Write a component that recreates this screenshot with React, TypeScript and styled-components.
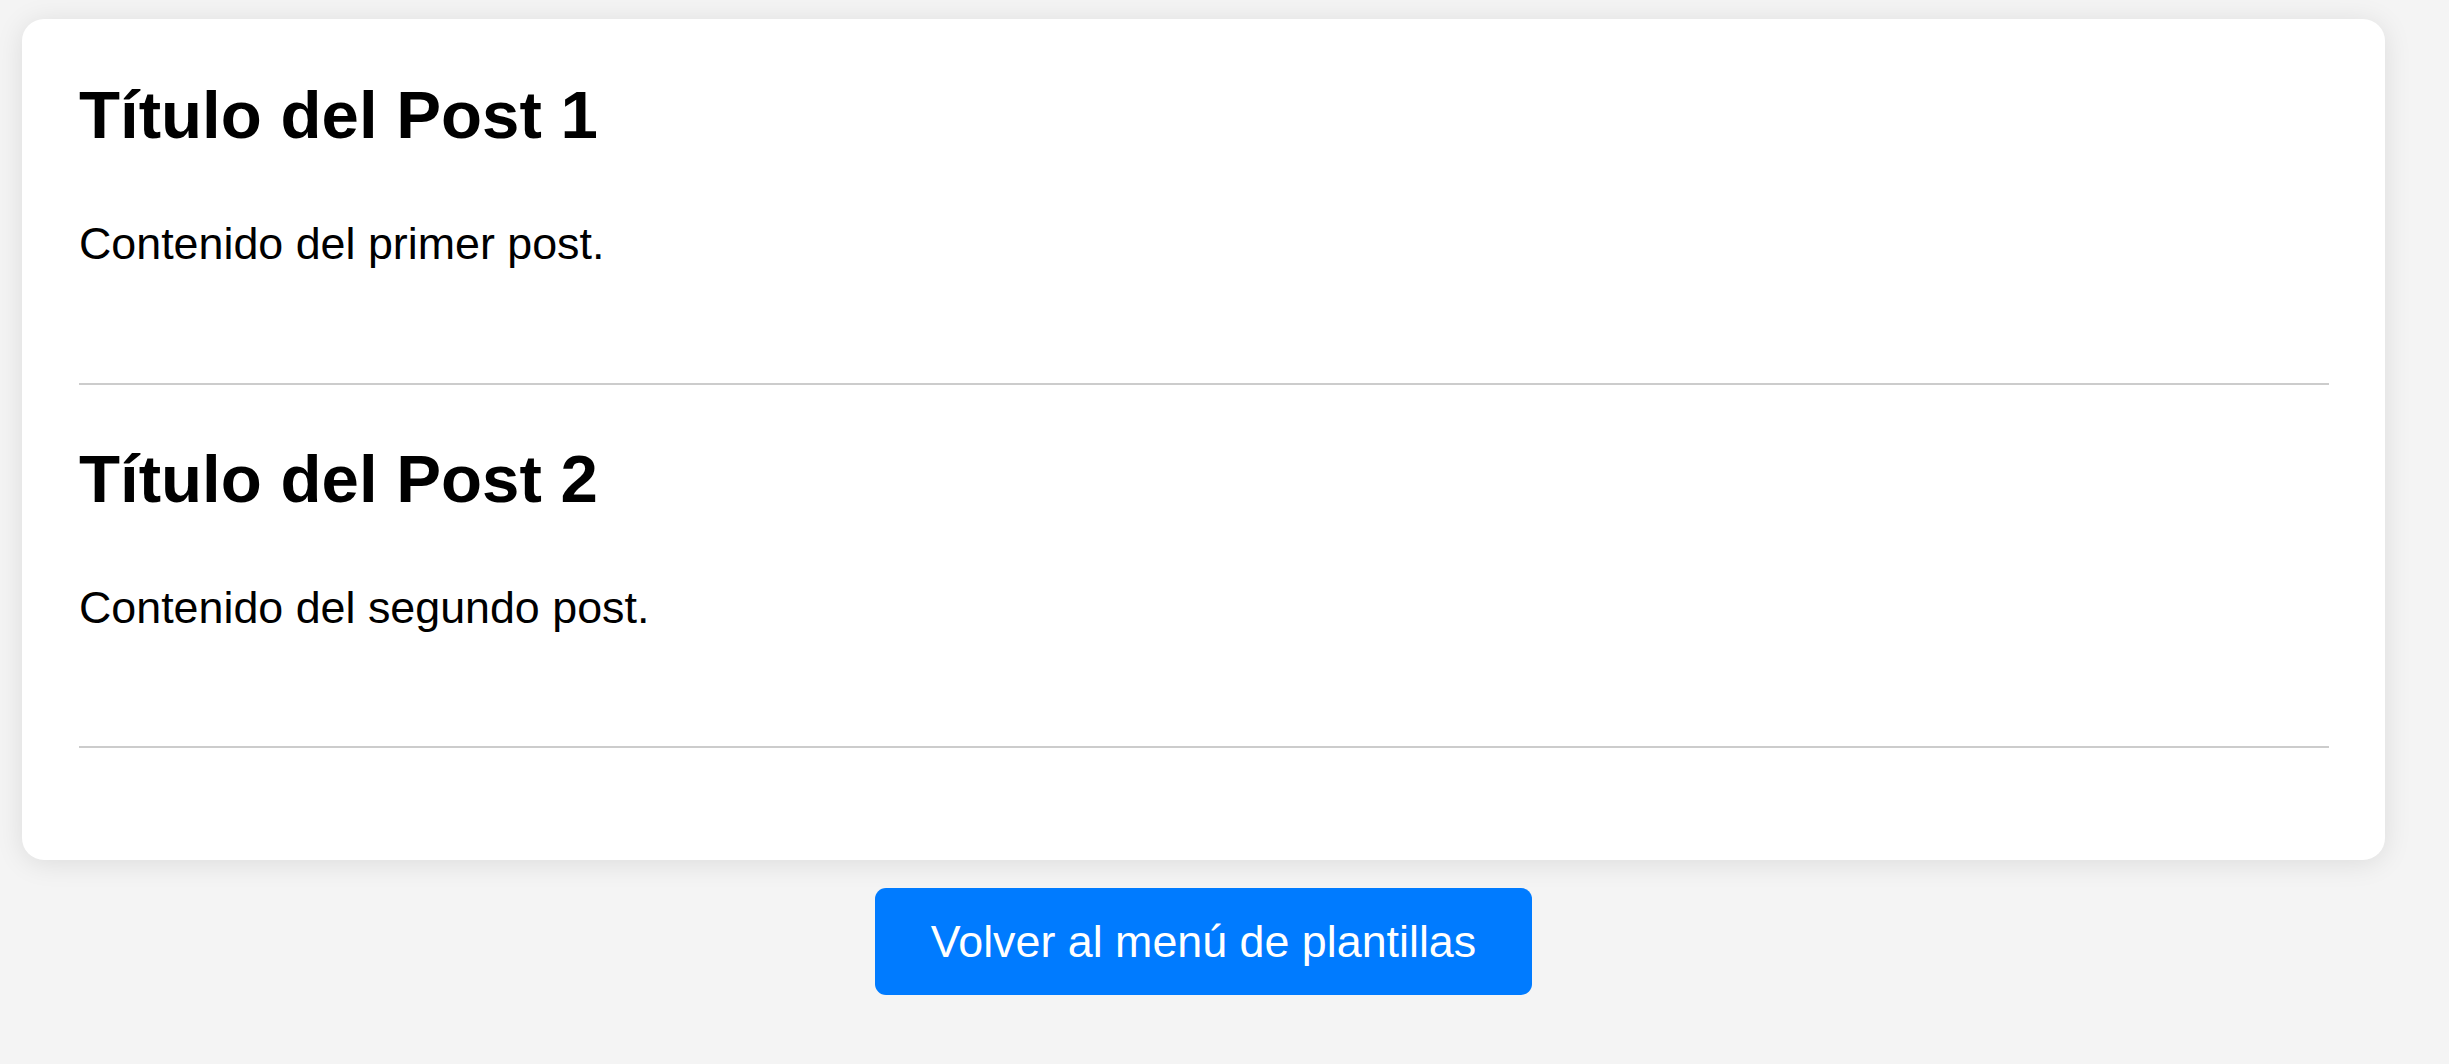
import styled, { createGlobalStyle } from "styled-components";

const GlobalStyle = createGlobalStyle`
  html, body {
    margin: 0;
    padding: 0;
    background-color: #f4f4f4;
    font-family: "Liberation Sans", Arial, sans-serif;
    color: #000;
  }
`;

const posts = [
  { id: 1, title: "Título del Post 1", body: "Contenido del primer post." },
  { id: 2, title: "Título del Post 2", body: "Contenido del segundo post." },
];

const App = () => {
  return (
    <>
      <GlobalStyle />
      <Page>
        <Card>
          {posts.map((post) => (
            <Post key={post.id}>
              <Title>{post.title}</Title>
              <Text>{post.body}</Text>
            </Post>
          ))}
        </Card>

        <BackButton type="button">Volver al menú de plantillas</BackButton>
      </Page>
    </>
  );
};

export default App;

const Page = styled.main`
  display: flex;
  flex-direction: column;
  align-items: center;
  padding: 19px 64px 40px 22px;
`;

const Card = styled.section`
  width: 100%;
  box-sizing: border-box;
  background-color: #fff;
  border-radius: 22px;
  padding: 57px 56px 57px 57px;
  box-shadow: 0 3px 28px rgba(0, 0, 0, 0.1);
`;

const Post = styled.article`
  padding-bottom: 113.5px;
  border-bottom: 2px solid #cccccc;
  margin-bottom: 55px;
`;

const Title = styled.h2`
  margin: 0 0 65px;
  font-size: 67.2px;
  font-weight: 700;
`;

const Text = styled.p`
  margin: 0;
  font-size: 44.8px;
`;

const BackButton = styled.button`
  margin-top: 28px;
  padding: 28px 56px;
  border: none;
  border-radius: 11px;
  background-color: #007bff;
  color: #fff;
  font-family: "Liberation Sans", Arial, sans-serif;
  font-size: 44.8px;
  cursor: pointer;
`;
